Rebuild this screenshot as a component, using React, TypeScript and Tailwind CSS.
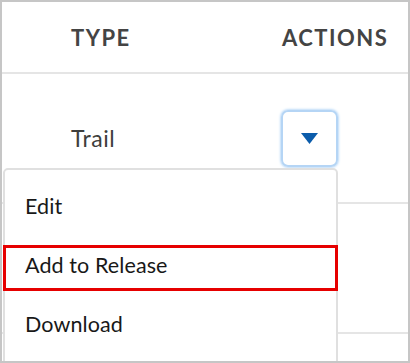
import { useState } from "react";

const menuItems = ["Edit", "Add to Release", "Download"];

export default function App() {
  const [open] = useState(true);

  return (
    <div
      className="relative w-[410px] h-[363px] overflow-hidden border-2 border-[#c6c6c6] bg-white text-[#3e3e3c]"
      style={{ fontFamily: "Lato, 'Open Sans', sans-serif" }}
    >
      {/* header */}
      <div className="flex h-[72px] items-center border-b-2 border-[#e5e5e5] text-[22px] font-bold tracking-[1.5px] text-[#444444]">
        <div className="w-[279px] pl-[69px]">TYPE</div>
        <div className="pl-[1px]">ACTIONS</div>
      </div>

      {/* rows */}
      {["Trail", "", ""].map((type, i) => (
        <div key={i} className="flex h-[130px] items-center border-b-2 border-[#e5e5e5]">
          <div className="w-[279px] pl-[69px] text-[23px] tracking-[0.5px]">{type}</div>
          {i === 0 && (
            <button className="flex h-[57px] w-[57px] items-center justify-center rounded-[7px] border-2 border-[#b5d5f5] shadow-[0_0_3px_#7db8f0]">
              <svg width="17" height="11" viewBox="0 0 17 11">
                <path d="M0 0h17L8.5 11z" fill="#0b5cab" />
              </svg>
            </button>
          )}
        </div>
      ))}

      {/* dropdown menu */}
      {open && (
        <div className="absolute left-[1px] top-[166px] w-[335px] h-[220px] rounded-[5px] border-2 border-[#e0e0e0] bg-white pt-[7px] text-[21.5px] tracking-[0.1px] text-[#181818]">
          {menuItems.map((item) => (
            <div key={item} className="flex h-[59px] items-center pl-[20px]">
              {item}
            </div>
          ))}
        </div>
      )}

      {/* highlight box */}
      <div className="absolute left-[1px] top-[243px] w-[335px] h-[46px] border-[3px] border-[#e60000]" />
    </div>
  );
}
